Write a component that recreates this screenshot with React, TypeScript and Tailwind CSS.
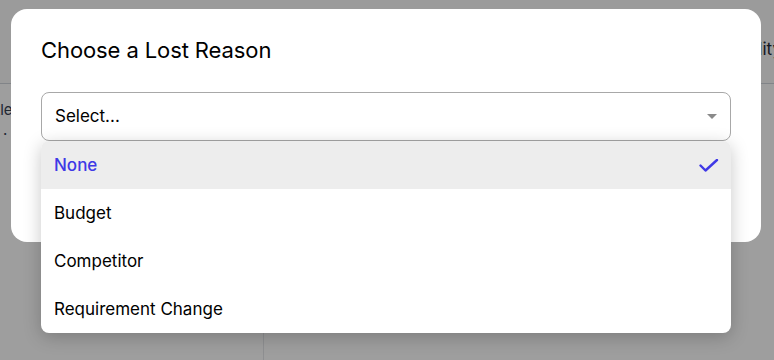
import { useState } from "react";

const reasons = ["None", "Budget", "Competitor", "Requirement Change"];

function Caret() {
  return (
    <svg width="10" height="5" viewBox="0 0 10 5" className="shrink-0">
      <path d="M0 0 L10 0 L5 5 Z" fill="#8a8a8a" />
    </svg>
  );
}

function Check() {
  return (
    <svg width="20" height="14" viewBox="0 0 20 14" fill="none">
      <path d="M1.5 6.5 L6.5 11.5 L18 1" stroke="#4039e6" strokeWidth="2.4" strokeLinecap="round" strokeLinejoin="round" />
    </svg>
  );
}

export default function App() {
  const [selected] = useState("None");

  return (
    <div className="relative w-[774px] h-[360px] overflow-hidden bg-white font-['Inter','Liberation_Sans',sans-serif]">
      {/* page behind the modal */}
      <div className="flex flex-col h-full">
        <div className="h-[84px] border-b border-gray-300 bg-[#fafafa] flex items-start justify-end">
          <span className="mt-[37px] -mr-[8px] text-[17px] text-gray-800">Quality</span>
        </div>
        <div className="flex flex-1">
          <div className="w-[270px] border-r border-gray-200 pt-[14px] text-[15px] leading-[24px] text-gray-700 -ml-[6px]">
            <div className="-ml-[12px]">Title</div>
            <div className="-ml-[4px]">n ·</div>
          </div>
          <div className="flex-1" />
        </div>
      </div>

      {/* overlay */}
      <div className="absolute inset-0 bg-black/[0.38]" />

      {/* modal */}
      <div className="absolute left-[11px] top-[9px] w-[750px] h-[233px] rounded-2xl bg-white px-[30px] pt-[27px]">
        <h2 className="text-[22px] leading-[28px] text-black tracking-[-0.1px]">Choose a Lost Reason</h2>
        <div className="mt-[28px] h-[49px] rounded-lg border border-[#a8a8a8] flex items-center justify-between pl-[13px] pr-[13px]">
          <span className="text-[17px] text-black">Select...</span>
          <Caret />
        </div>
      </div>

      {/* open dropdown */}
      <div className="absolute left-[41px] top-[141px] w-[690px] rounded-lg bg-white overflow-hidden shadow-[0_4px_18px_rgba(0,0,0,0.22)]">
        {reasons.map((r) => (
          <div
            key={r}
            className={
              r === selected
                ? "h-[48px] flex items-center justify-between pl-[13px] pr-[12px] pt-[2px] bg-[#ededed] text-[17px] font-medium text-[#4039e6]"
                : "h-[48px] flex items-center pl-[13px] pt-[2px] text-[17px] text-black"
            }
          >
            <span>{r}</span>
            {r === selected && <Check />}
          </div>
        ))}
      </div>
    </div>
  );
}
